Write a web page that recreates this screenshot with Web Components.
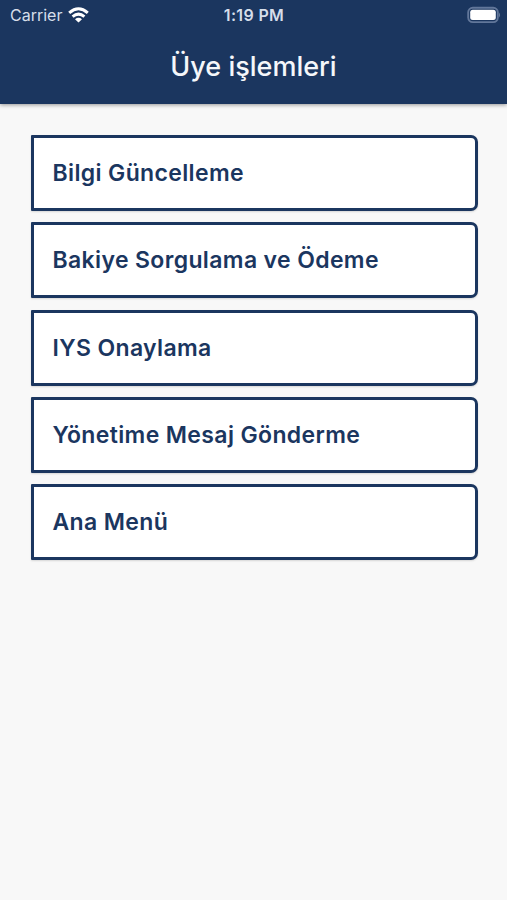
<!DOCTYPE html>
<html lang="tr"><head><meta charset="utf-8"><title>Üye işlemleri</title>
<style>body{margin:0;background:#f8f8f8;font-family:Inter,"Liberation Sans",sans-serif}</style></head>
<body><member-page></member-page>
<script>
const define=(name,html)=>customElements.define(name,class extends HTMLElement{
  constructor(){super();this.attachShadow({mode:'open'}).innerHTML=html;}
});
define('status-bar',`<style>
:host{display:grid;grid-template-columns:1fr auto 1fr;align-items:center;height:30px;padding:0 6px 0 10px;box-sizing:border-box;color:#d6deea}
.left{display:flex;align-items:center;gap:6px;font-size:16px}
.time{font-size:16px;font-weight:600;letter-spacing:.35px;margin-right:3px}
.right{display:flex;justify-content:flex-end}
svg{display:block}
</style><div class="left"><span>Carrier</span><svg width="21" height="16" viewBox="0 0 21 16" fill="none" stroke="#fff" stroke-width="3"><path d="M1.2 5.8Q10.5-2.2 19.8 5.8M4.6 9.6Q10.5 4.6 16.4 9.6"/><path d="M7 12.2Q10.5 9.4 14 12.2L10.5 15.6Z" fill="#fff" stroke="none"/></svg></div>
<span class="time">1:19 PM</span>
<div class="right"><svg width="34" height="18" viewBox="0 0 34 18"><rect x="1.2" y="1.7" width="29.6" height="14.4" rx="4.6" fill="none" stroke="#62779a" stroke-width="1.9"/><rect x="3.2" y="3.8" width="25.6" height="10.3" rx="2.5" fill="#fff"/><path d="M32 6.4Q34.2 9 32 11.6Z" fill="#62779a"/></svg></div>`);
define('title-bar',`<style>:host{display:flex;height:72px;box-sizing:border-box;align-items:center;justify-content:center;color:#f5f7fa;font-size:27px;font-weight:500}</style><slot></slot>`);
define('menu-item',`<style>:host{display:flex;align-items:center;height:76px;box-sizing:border-box;border:3px solid #1b365f;border-radius:1px 7px 7px 1px;background:#fff;padding:0 19px;color:#1b365f;font-size:23px;font-weight:600;letter-spacing:.36px;box-shadow:0 1px 2px #0002}</style><span><slot></slot></span>`);
define('member-page',`<style>
:host{display:block;min-height:900px}
header{background:#1b365f;height:104px;box-shadow:0 1px 4px #0006}
nav{display:grid;gap:11.35px;padding:31px 29px 0 30.5px}
</style><header><status-bar></status-bar><title-bar>Üye işlemleri</title-bar></header>
<nav><menu-item>Bilgi Güncelleme</menu-item><menu-item>Bakiye Sorgulama ve Ödeme</menu-item><menu-item>IYS Onaylama</menu-item><menu-item>Yönetime Mesaj Gönderme</menu-item><menu-item>Ana Menü</menu-item></nav>`);
</script></body></html>
